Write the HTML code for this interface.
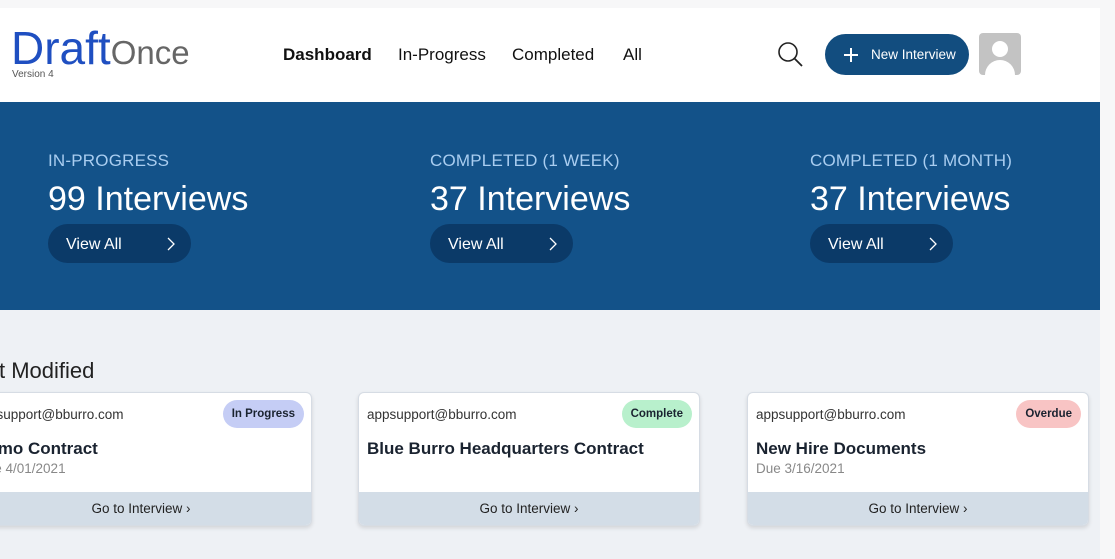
<!DOCTYPE html>
<html><head><meta charset="utf-8"><style>
*{box-sizing:border-box;margin:0;padding:0}
body{width:1115px;height:559px;overflow:hidden;background:#f7f7f8;font-family:"Liberation Sans",sans-serif;position:relative}
.abs{position:absolute}
#hdr{left:0;top:8px;width:1100px;height:94px;background:#fff}
#band{left:0;top:102px;width:1100px;height:208px;background:#135289}
#body{left:0;top:310px;width:1100px;height:249px;background:#eef1f5}
.nav{top:45px;font-size:17px;color:#111}
.stat .l{font-size:17px;color:#a9cdf0;letter-spacing:.2px}
.stat .n{font-size:34px;color:#fff;margin-top:9px}
.btn{position:absolute;top:122px;width:143px;height:39px;border-radius:20px;background:#0b3a68;color:#fff;font-size:16px;line-height:41px;padding-left:18px}
.btn svg{position:absolute;right:16px;top:13px}
.card{position:absolute;top:392px;width:342px;height:134px;background:#fff;border-radius:6px;border:1px solid #d6dce4;box-shadow:0 2px 4px rgba(0,0,0,.12);overflow:hidden}
.card .em{position:absolute;left:8px;top:14px;font-size:13.5px;color:#333}
.card .t{position:absolute;left:8px;top:46px;font-size:17px;font-weight:bold;color:#1a2330}
.card .d{position:absolute;left:8px;top:68px;font-size:13.5px;color:#888}
.card .b{position:absolute;right:7px;top:7px;height:28px;border-radius:14px;font-size:11.5px;font-weight:bold;line-height:28px;padding:0 9px;color:#1a2330}
.card .f{position:absolute;left:0;bottom:0;width:100%;height:33px;background:#d3dde7;text-align:center;font-size:13.5px;line-height:33px;color:#222}
</style></head><body>
<div class="abs" id="hdr"></div>
<div class="abs" id="band"></div>
<div class="abs" id="body"></div>
<div class="abs" style="left:11px;top:24px;font-size:46px;color:#1f4fc1;line-height:48px">Draft<span style="font-size:33px;color:#666">Once</span></div>
<div class="abs" style="left:12px;top:69px;font-size:10px;color:#555">Version 4</div>
<div class="abs nav" style="left:283px;font-weight:bold">Dashboard</div>
<div class="abs nav" style="left:398px">In-Progress</div>
<div class="abs nav" style="left:512px">Completed</div>
<div class="abs nav" style="left:623px">All</div>
<svg class="abs" style="left:776px;top:40px" width="28" height="28" viewBox="0 0 28 28"><circle cx="12" cy="12" r="9" fill="none" stroke="#222" stroke-width="1.6"/><path d="M18.5 18.5L26 26" stroke="#222" stroke-width="1.8"/></svg>
<div class="abs" style="left:825px;top:34px;width:144px;height:41px;border-radius:21px;background:#124d7f;color:#fff;font-size:13.5px;line-height:41px;padding-left:46px">New Interview</div>
<svg class="abs" style="left:842px;top:46px" width="18" height="18"><path d="M9 2v14M2 9h14" stroke="#fff" stroke-width="2"/></svg>
<div class="abs" style="left:979px;top:33px;width:42px;height:42px;border-radius:4px;background:#c3c3c3;overflow:hidden">
<svg width="42" height="42"><circle cx="21" cy="16" r="8" fill="#fff"/><ellipse cx="21" cy="42" rx="15" ry="15" fill="#fff"/></svg></div>
<div class="abs stat" style="left:48px;top:151px"><div class="l">IN-PROGRESS</div><div class="n">99 Interviews</div></div>
<div class="abs stat" style="left:430px;top:151px"><div class="l">COMPLETED (1 WEEK)</div><div class="n">37 Interviews</div></div>
<div class="abs stat" style="left:810px;top:151px"><div class="l">COMPLETED (1 MONTH)</div><div class="n">37 Interviews</div></div>
<div class="abs" style="left:48px;top:102px"><div class="btn">View All<svg width="8" height="14"><path d="M1 1l6 6-6 6" fill="none" stroke="#fff" stroke-width="1.3"/></svg></div></div>
<div class="abs" style="left:430px;top:102px"><div class="btn">View All<svg width="8" height="14"><path d="M1 1l6 6-6 6" fill="none" stroke="#fff" stroke-width="1.3"/></svg></div></div>
<div class="abs" style="left:810px;top:102px"><div class="btn">View All<svg width="8" height="14"><path d="M1 1l6 6-6 6" fill="none" stroke="#fff" stroke-width="1.3"/></svg></div></div>
<div class="abs" style="left:-12px;top:358px;font-size:22px;color:#222">st Modified</div>
<div class="card" style="left:-30px"><div class="em" style="left:3px">appsupport@bburro.com</div><div class="b" style="background:#c5cdf5">In Progress</div><div class="t" style="left:5px">Demo Contract</div><div class="d" style="left:6px">Due 4/01/2021</div><div class="f">Go to Interview ›</div></div>
<div class="card" style="left:358px"><div class="em">appsupport@bburro.com</div><div class="b" style="background:#b8f0cc">Complete</div><div class="t">Blue Burro Headquarters Contract</div><div class="f">Go to Interview ›</div></div>
<div class="card" style="left:747px"><div class="em">appsupport@bburro.com</div><div class="b" style="background:#f8c4c4">Overdue</div><div class="t">New Hire Documents</div><div class="d">Due 3/16/2021</div><div class="f">Go to Interview ›</div></div>
</body></html>
